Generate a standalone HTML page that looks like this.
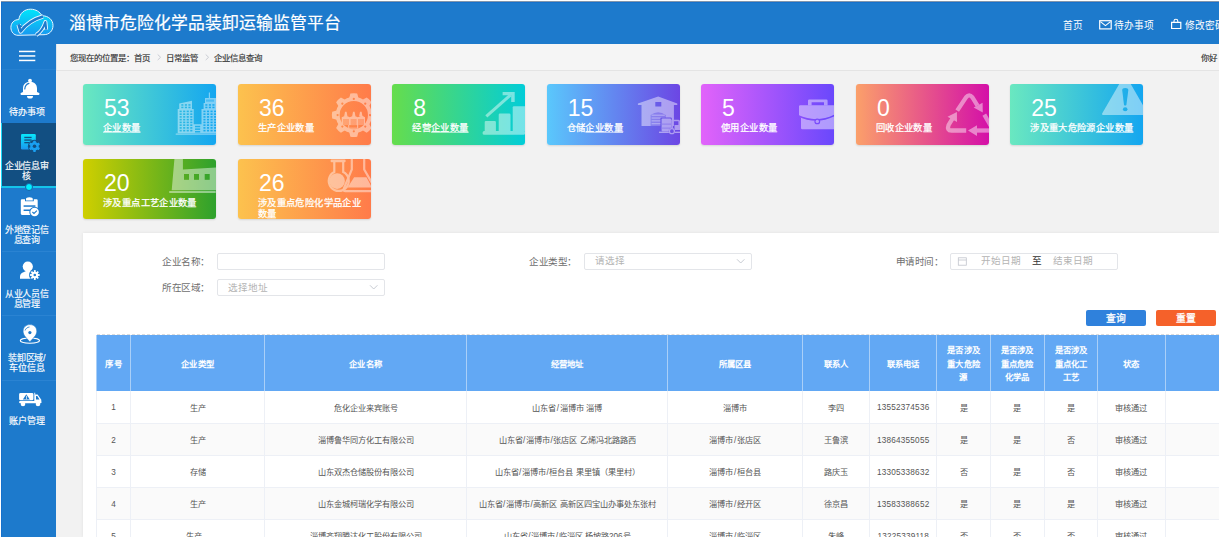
<!DOCTYPE html>
<html lang="zh-CN"><head><meta charset="utf-8">
<style>
*{box-sizing:border-box;margin:0;padding:0}
html,body{width:1219px;height:537px;overflow:hidden;background:#f2f2f2;font-family:"Liberation Sans",sans-serif}
.abs{position:absolute}
#frame{position:absolute;left:0;top:0;width:1219px;height:537px;border-top:1px solid #fff;border-left:1px solid #fff;pointer-events:none;z-index:80}
#frame2{position:absolute;left:1px;top:1px;width:1218px;height:1px;background:#8296ab;z-index:80}
#frame3{position:absolute;left:1px;top:2px;width:1218px;height:1px;background:#1671cc;z-index:80}
#frame4{position:absolute;left:1px;top:2px;width:1px;height:42px;background:#1671cc;z-index:49}
#header{position:absolute;left:0;top:0;width:1219px;height:44px;background:#1d7acc}
#title{position:absolute;left:69px;top:14px;font-size:16.8px;line-height:20px;color:#fff;white-space:nowrap;-webkit-text-stroke:0.2px #fff}
.hl{position:absolute;top:18.8px;font-size:9.7px;line-height:14px;color:#fff;white-space:nowrap}
#side{position:absolute;left:0;top:44px;width:56px;height:493px;background:#1d7acc;z-index:55}
.sitem{z-index:5}
.sitem{position:absolute;left:0;width:53.5px;color:#fff;text-align:center;font-size:9px;line-height:10px;letter-spacing:-0.25px;-webkit-text-stroke:0.15px #fff}
.sep{position:absolute;left:0;width:56px;height:1px;background:#2a83d2}
#crumb{position:absolute;left:56px;top:44px;width:1163px;height:27px;background:#f5f5f5;border-bottom:1px solid #e4e4e4;border-left:1px solid #dfe6ee}
#crumb .t{position:absolute;top:4px;font-size:8.45px;line-height:20px;color:#333;white-space:nowrap;-webkit-text-stroke:0.15px #333}
#crumb .g{color:#bbb}
.card{position:absolute;width:133px;height:61px;border-radius:3px;overflow:hidden;box-shadow:0 1px 2px rgba(0,0,0,.12);color:#fff}
.card .n{position:absolute;left:21px;top:10.3px;font-size:23px;line-height:28px;white-space:nowrap}
.card .l{position:absolute;left:20px;top:38.5px;width:108px;font-size:9.3px;line-height:11.2px;letter-spacing:0.38px;-webkit-text-stroke:0.25px #fff}
.card u{text-decoration:underline;text-decoration-color:rgba(255,255,255,.55);text-decoration-thickness:0.5px;text-underline-offset:0.5px}
.card svg{position:absolute;left:0;top:0}
#panel{position:absolute;left:83px;top:233px;width:1136px;height:304px;background:#fff;box-shadow:0 0 3px rgba(0,0,0,.08)}
.lab{position:absolute;font-size:9.6px;line-height:14px;letter-spacing:-0.5px;color:#6e6e6e;white-space:nowrap}
.inp{position:absolute;height:17px;border:1px solid #e3e5e9;border-radius:2px;background:#fff}
.ph{position:absolute;font-size:9.6px;line-height:14px;color:#b4b4b4;white-space:nowrap}
.btn{position:absolute;width:60px;height:16.5px;border-radius:2px;color:#fff;font-size:9.8px;line-height:17.4px;text-align:center;-webkit-text-stroke:0.3px #fff}
table{position:absolute;left:96.4px;top:334.5px;width:1187.3px;border-collapse:collapse;table-layout:fixed;font-size:8.2px;color:#555}
th{background:#62a8f4;color:#fff;font-weight:bold;height:56.5px;border-left:1px solid #a9cff8;line-height:13.7px;font-size:8.4px;letter-spacing:0.2px;padding-top:3.4px}
td{height:32px;padding-top:0px;text-align:center;border-left:1px solid #edf0f6;border-bottom:1px solid #edf0f6;white-space:nowrap}
tr.z td{background:#fafafa}
.sl{font-style:normal;margin:0 0.6px}
.dg{position:relative;top:1.2px}
#tdash{position:absolute;left:97px;top:334px;width:1122px;height:1px;border-top:1px dashed #dcdcdc;z-index:3}
</style></head><body>
<div id="header">
  <div id="title">淄博市危险化学品装卸运输监管平台</div>
  <div class="hl" style="left:1063px">首页</div>
  <div class="hl" style="left:1114px">待办事项</div>
  <div class="hl" style="left:1185px">修改密码</div>
  <svg class="abs" style="left:1090px;top:10px" width="100" height="30" viewBox="1090 10 100 30">
    <rect x="1099.7" y="20.7" width="11.5" height="8.2" fill="none" stroke="#fff" stroke-width="1.2"/>
    <path d="M1100.4,21.6 L1105.45,25.6 L1110.5,21.6" fill="none" stroke="#fff" stroke-width="1.1"/>
    <path d="M1171.6,22.3 L1180.8,22.3 L1180.8,28.5 L1171.6,28.5 Z" fill="none" stroke="#fff" stroke-width="1.2"/>
    <path d="M1174,22.3 L1174,21 Q1174,19.3 1175.9,19.3 Q1177.8,19.3 1177.8,21 L1177.8,22.3" fill="none" stroke="#fff" stroke-width="1.1"/>
  </svg>
</div>
<div id="side">
  <div class="abs" style="left:1px;top:0;width:1px;height:493px;background:#1671cc;z-index:1"></div>
  <div class="sep" style="top:25px;background:#2580d0"></div>
  <div class="abs" style="left:1px;top:79.3px;width:55px;height:63.7px;background:#124f82;border-left:1.5px solid #1ad8f8;z-index:2"></div>
  <div class="abs" style="left:1px;top:142px;width:55px;height:2.2px;background:#14c4ea;z-index:3"></div>
  <div class="abs" style="left:25.3px;top:138.6px;width:8px;height:8px;border-radius:50%;background:#00efff;border:1px solid #1760a6;z-index:4"></div>
  <div class="sep" style="top:206.5px"></div>
  <div class="sep" style="top:270.5px"></div>
  <div class="sep" style="top:335.5px"></div>
  <div class="sitem" style="top:63px">待办事项</div>
  <div class="sitem" style="top:117px">企业信息审<br>核</div>
  <div class="sitem" style="top:181px">外地登记信<br>息查询</div>
  <div class="sitem" style="top:245px">从业人员信<br>息管理</div>
  <div class="sitem" style="top:309px">装卸区域/<br>车位信息</div>
  <div class="sitem" style="top:372px">账户管理</div>
</div>
<svg class="abs" style="left:0;top:0;z-index:70" width="60" height="537" viewBox="0 0 60 537">
  <defs>
    <linearGradient id="cg" x1="0" y1="0" x2="0" y2="1"><stop offset="0" stop-color="#00e6fb"/><stop offset="1" stop-color="#1898f0"/></linearGradient>
    <linearGradient id="dg" x1="0" y1="0" x2="0" y2="1"><stop offset="0" stop-color="#08e8fc"/><stop offset="1" stop-color="#1a96ef"/></linearGradient>
  </defs>
  <!-- cloud logo -->
  <path d="M18,35.3 C13.5,35.3 10.9,31.5 10.9,27.5 C10.9,23 14,19.6 18.8,19.6 C19.8,13 24.5,9.2 30.5,9.2 C36,9.2 40,12 42,15.8 C48.5,15.6 53,20 53,25.5 C53,31 49,34.7 44,34.7 Z" fill="url(#cg)" stroke="#e8f6ff" stroke-width="1"/>
  <path d="M18.6,24.6 L20.6,31.4 Q28.5,20.5 43,16.4" fill="none" stroke="#e8f6ff" stroke-width="4.4" stroke-linejoin="round"/>
  <path d="M18.6,24.6 L20.6,31.4 Q28.5,20.5 43,16.4" fill="none" stroke="#1d7acc" stroke-width="2.6" stroke-linejoin="round"/>
  <path d="M18.3,23.6 L22.6,26.6 L19.6,28 Z" fill="#1d7acc"/>
  <path d="M36.2,35 Q42.5,31 45.4,22 L46.2,29.6" fill="none" stroke="#e8f6ff" stroke-width="3.9" stroke-linejoin="round"/>
  <path d="M36.2,35 Q42.5,31 45.4,22 L46.2,29.6" fill="none" stroke="#1d7acc" stroke-width="2.1" stroke-linejoin="round"/>
  <!-- hamburger -->
  <rect x="19" y="50.7" width="16.3" height="1.5" fill="#fff"/>
  <rect x="19" y="55.2" width="16.3" height="1.5" fill="#fff"/>
  <rect x="19" y="59.7" width="16.3" height="1.5" fill="#fff"/>
  <!-- bell -->
  <circle cx="30" cy="80.6" r="1.9" fill="#fff"/>
  <path d="M23,92 L23,88.5 C23,84.2 26,81.8 30,81.8 C34,81.8 37,84.2 37,88.5 L37,92 L39.2,93 C39.7,93.5 39.5,95 38.6,95 L21.4,95 C20.5,95 20.3,93.5 20.8,93 Z" fill="#fff"/>
  <path d="M27,95.9 L33,95.9 A3,2.6 0 0 1 27,95.9 Z" fill="#fff"/>
  <path d="M28.9,83.4 C26.6,84.1 25,86 24.8,89" fill="none" stroke="#1d7acc" stroke-width="1.2" stroke-linecap="round"/>
  <!-- doc gear (active) -->
  <rect x="21" y="134" width="14.8" height="15.6" rx="1.3" fill="url(#dg)"/>
  <rect x="24.3" y="136.8" width="7.3" height="1.3" fill="#124f82"/>
  <rect x="24.3" y="139.4" width="7.3" height="1.3" fill="#124f82"/>
  <rect x="24.3" y="142" width="5" height="1.3" fill="#124f82"/>
  <circle cx="34.5" cy="146.3" r="6.6" fill="#124f82"/>
  <g transform="translate(34.5,146.3)" fill="#1aa0f2">
    <circle r="4.2"/>
    <rect x="-1.3" y="-5.6" width="2.6" height="11.2" rx=".6"/>
    <rect x="-1.3" y="-5.6" width="2.6" height="11.2" rx=".6" transform="rotate(60)"/>
    <rect x="-1.3" y="-5.6" width="2.6" height="11.2" rx=".6" transform="rotate(120)"/>
  </g>
  <circle cx="34.5" cy="146.3" r="1.8" fill="#124f82"/>
  <!-- clipboard check -->
  <path d="M22,199.3 L25,199.3 L25,201.3 L33.8,201.3 L33.8,199.3 L36.6,199.3 Q37.7,199.3 37.7,200.4 L37.7,213.8 Q37.7,214.9 36.6,214.9 L22,214.9 Q20.8,214.9 20.8,213.8 L20.8,200.4 Q20.8,199.3 22,199.3 Z" fill="#fff"/>
  <path d="M26,200.6 L26,199 Q26,197.4 29.4,197.2 Q32.8,197.4 32.8,199 L32.8,200.6 Z" fill="#fff"/>
  <rect x="23.6" y="205.3" width="11.8" height="1.5" fill="#1d7acc"/>
  <rect x="23.6" y="209.5" width="7.6" height="1.5" fill="#1d7acc"/>
  <circle cx="34.6" cy="212" r="5.3" fill="#1d7acc"/>
  <circle cx="34.6" cy="212" r="4.3" fill="#fff"/>
  <path d="M32.4,212 L34,213.5 L36.9,210.6" fill="none" stroke="#1d7acc" stroke-width="1.1"/>
  <!-- person gear -->
  <circle cx="27.8" cy="266.6" r="5.1" fill="#fff"/>
  <path d="M20,278.7 L20,276.5 Q20,273 24,272 L26,271 L31,271 L31,278.7 Z" fill="#fff"/>
  <circle cx="34.8" cy="275" r="5.8" fill="#1d7acc"/>
  <g transform="translate(34.8,275)" fill="#fff">
    <circle r="3.3"/>
    <rect x="-0.9" y="-4.9" width="1.8" height="9.8"/>
    <rect x="-0.9" y="-4.9" width="1.8" height="9.8" transform="rotate(45)"/>
    <rect x="-0.9" y="-4.9" width="1.8" height="9.8" transform="rotate(90)"/>
    <rect x="-0.9" y="-4.9" width="1.8" height="9.8" transform="rotate(135)"/>
  </g>
  <circle cx="34.8" cy="275" r="1.3" fill="#1d7acc"/>
  <!-- pin -->
  <ellipse cx="29.9" cy="340.6" rx="9.6" ry="2.6" fill="none" stroke="#fff" stroke-width="1.1"/>
  <path d="M29.9,341.9 C27,338.5 23.1,335.5 23.1,331.3 C23.1,327.3 26,324.6 29.9,324.6 C33.8,324.6 36.8,327.3 36.8,331.3 C36.8,335.5 32.8,338.5 29.9,341.9 Z" fill="#fff" stroke="#1d7acc" stroke-width="0.6"/>
  <circle cx="29.9" cy="332.6" r="1.6" fill="#1d7acc"/>
  <path d="M29.5,327 C27.5,327.2 25.6,328.5 25.1,330.5" fill="none" stroke="#1d7acc" stroke-width="0.8"/>
  <!-- truck -->
  <rect x="19.1" y="393" width="14.3" height="7.3" rx="1.4" fill="#fff"/>
  <path d="M26.3,394.2 L29.8,399.4 L22.9,399.4 Z" fill="#1d7acc"/>
  <rect x="26" y="395.8" width="0.7" height="3.4" fill="#fff"/>
  <path d="M34.3,392.8 L35.2,392.8 L35.2,394.6 L37.6,394.6 L41.3,399.8 L41.3,403 L34.3,403 Z" fill="#fff"/>
  <path d="M36,396 L37.3,396 L39.5,399.5 L36,399.5 Z" fill="#1d7acc"/>
  <rect x="19.1" y="401" width="22.2" height="2.2" rx="1" fill="#fff"/>
  <circle cx="23" cy="403.9" r="2.3" fill="#fff"/>
  <circle cx="38" cy="403.9" r="2.3" fill="#fff"/>
</svg>
<div id="crumb">
  <div class="t" style="left:13px">您现在的位置是：首页</div>
  <svg class="abs" style="left:99px;top:9px" width="6" height="9" viewBox="0 0 6 9"><path d="M1.7,1.5 L4.6,4.25 L1.7,7" fill="none" stroke="#c4c6cf" stroke-width="0.9"/></svg>
  <div class="t" style="left:109.3px">日常监管</div>
  <svg class="abs" style="left:147.3px;top:9px" width="6" height="9" viewBox="0 0 6 9"><path d="M1.7,1.5 L4.6,4.25 L1.7,7" fill="none" stroke="#c4c6cf" stroke-width="0.9"/></svg>
  <div class="t" style="left:157.3px">企业信息查询</div>
  <div class="t" style="left:1144px">你好</div>
</div>
<!--CARDS-->
<div class="card" style="left:83.0px;top:84px;height:60.6px;background:linear-gradient(90deg,#6ae8c0,#14a6f0)">
<svg width="133" height="61" viewBox="0 0 133 61"><defs><mask id="m0" maskUnits="userSpaceOnUse" x="0" y="0" width="133" height="61"><path d="M96.2,19.5 L109,16.8 L109,25 L110.7,25 L110.7,40.2 L118.5,40.2 L118.5,25 L120.6,25 L120.6,19 L122,19 L122,14 L125.8,14 L125.8,8.4 L127,8.4 L127,14 L133,14 L133,49.3 L94.7,49.3 L94.7,25 L96.2,25 Z" fill="#fff"/>
<g fill="#000"><rect x="96.60" y="26.60" width="2.1" height="1.6"/><rect x="120.40" y="26.60" width="2.1" height="1.6"/><rect x="100.15" y="26.60" width="2.1" height="1.6"/><rect x="123.95" y="26.60" width="2.1" height="1.6"/><rect x="103.70" y="26.60" width="2.1" height="1.6"/><rect x="127.50" y="26.60" width="2.1" height="1.6"/><rect x="107.25" y="26.60" width="2.1" height="1.6"/><rect x="131.05" y="26.60" width="2.1" height="1.6"/><rect x="96.60" y="29.35" width="2.1" height="1.6"/><rect x="120.40" y="29.35" width="2.1" height="1.6"/><rect x="100.15" y="29.35" width="2.1" height="1.6"/><rect x="123.95" y="29.35" width="2.1" height="1.6"/><rect x="103.70" y="29.35" width="2.1" height="1.6"/><rect x="127.50" y="29.35" width="2.1" height="1.6"/><rect x="107.25" y="29.35" width="2.1" height="1.6"/><rect x="131.05" y="29.35" width="2.1" height="1.6"/><rect x="96.60" y="32.10" width="2.1" height="1.6"/><rect x="120.40" y="32.10" width="2.1" height="1.6"/><rect x="100.15" y="32.10" width="2.1" height="1.6"/><rect x="123.95" y="32.10" width="2.1" height="1.6"/><rect x="103.70" y="32.10" width="2.1" height="1.6"/><rect x="127.50" y="32.10" width="2.1" height="1.6"/><rect x="107.25" y="32.10" width="2.1" height="1.6"/><rect x="131.05" y="32.10" width="2.1" height="1.6"/><rect x="96.60" y="34.85" width="2.1" height="1.6"/><rect x="120.40" y="34.85" width="2.1" height="1.6"/><rect x="100.15" y="34.85" width="2.1" height="1.6"/><rect x="123.95" y="34.85" width="2.1" height="1.6"/><rect x="103.70" y="34.85" width="2.1" height="1.6"/><rect x="127.50" y="34.85" width="2.1" height="1.6"/><rect x="107.25" y="34.85" width="2.1" height="1.6"/><rect x="131.05" y="34.85" width="2.1" height="1.6"/><rect x="96.60" y="37.60" width="2.1" height="1.6"/><rect x="120.40" y="37.60" width="2.1" height="1.6"/><rect x="100.15" y="37.60" width="2.1" height="1.6"/><rect x="123.95" y="37.60" width="2.1" height="1.6"/><rect x="103.70" y="37.60" width="2.1" height="1.6"/><rect x="127.50" y="37.60" width="2.1" height="1.6"/><rect x="107.25" y="37.60" width="2.1" height="1.6"/><rect x="131.05" y="37.60" width="2.1" height="1.6"/><rect x="96.60" y="40.35" width="2.1" height="1.6"/><rect x="120.40" y="40.35" width="2.1" height="1.6"/><rect x="100.15" y="40.35" width="2.1" height="1.6"/><rect x="123.95" y="40.35" width="2.1" height="1.6"/><rect x="103.70" y="40.35" width="2.1" height="1.6"/><rect x="127.50" y="40.35" width="2.1" height="1.6"/><rect x="107.25" y="40.35" width="2.1" height="1.6"/><rect x="131.05" y="40.35" width="2.1" height="1.6"/><rect x="96.60" y="43.10" width="2.1" height="1.6"/><rect x="120.40" y="43.10" width="2.1" height="1.6"/><rect x="100.15" y="43.10" width="2.1" height="1.6"/><rect x="123.95" y="43.10" width="2.1" height="1.6"/><rect x="103.70" y="43.10" width="2.1" height="1.6"/><rect x="127.50" y="43.10" width="2.1" height="1.6"/><rect x="107.25" y="43.10" width="2.1" height="1.6"/><rect x="131.05" y="43.10" width="2.1" height="1.6"/><rect x="96.60" y="45.85" width="2.1" height="1.6"/><rect x="120.40" y="45.85" width="2.1" height="1.6"/><rect x="100.15" y="45.85" width="2.1" height="1.6"/><rect x="123.95" y="45.85" width="2.1" height="1.6"/><rect x="103.70" y="45.85" width="2.1" height="1.6"/><rect x="127.50" y="45.85" width="2.1" height="1.6"/><rect x="107.25" y="45.85" width="2.1" height="1.6"/><rect x="131.05" y="45.85" width="2.1" height="1.6"/><rect x="98.30" y="20.20" width="2.1" height="1.5"/><rect x="122.30" y="20.20" width="2.1" height="1.5"/><rect x="101.85" y="20.20" width="2.1" height="1.5"/><rect x="125.85" y="20.20" width="2.1" height="1.5"/><rect x="105.40" y="20.20" width="2.1" height="1.5"/><rect x="129.40" y="20.20" width="2.1" height="1.5"/><rect x="98.30" y="22.70" width="2.1" height="1.5"/><rect x="122.30" y="22.70" width="2.1" height="1.5"/><rect x="101.85" y="22.70" width="2.1" height="1.5"/><rect x="125.85" y="22.70" width="2.1" height="1.5"/><rect x="105.40" y="22.70" width="2.1" height="1.5"/><rect x="129.40" y="22.70" width="2.1" height="1.5"/><rect x="112" y="41.80" width="5.2" height="1.5"/><rect x="112" y="44.40" width="5.2" height="1.5"/><rect x="112" y="47.00" width="5.2" height="1.5"/><rect x="123" y="15.5" width="8" height="2.2" opacity=".5"/></g>
<rect x="92.5" y="49.4" width="41" height="1.4" rx=".7" fill="#fff"/></mask></defs><rect width="133" height="61" fill="#fff" opacity="0.45" mask="url(#m0)"/></svg>
<div class="n">53</div><div class="l"><u>企业数量</u></div></div>
<div class="card" style="left:237.9px;top:84px;height:60.6px;background:linear-gradient(90deg,#fcc24e,#ff7b4a)">
<svg width="133" height="61" viewBox="0 0 133 61"><defs><mask id="m1" maskUnits="userSpaceOnUse" x="0" y="0" width="133" height="61"><g transform="translate(115.8,31.1)">
<g fill="#fff"><path d="M-4.6,-17 L-3.4,-21.6 Q0,-22.3 3.4,-21.6 L4.6,-17 Z" transform="rotate(0)"/><path d="M-4.6,-17 L-3.4,-21.6 Q0,-22.3 3.4,-21.6 L4.6,-17 Z" transform="rotate(45)"/><path d="M-4.6,-17 L-3.4,-21.6 Q0,-22.3 3.4,-21.6 L4.6,-17 Z" transform="rotate(90)"/><path d="M-4.6,-17 L-3.4,-21.6 Q0,-22.3 3.4,-21.6 L4.6,-17 Z" transform="rotate(135)"/><path d="M-4.6,-17 L-3.4,-21.6 Q0,-22.3 3.4,-21.6 L4.6,-17 Z" transform="rotate(180)"/><path d="M-4.6,-17 L-3.4,-21.6 Q0,-22.3 3.4,-21.6 L4.6,-17 Z" transform="rotate(225)"/><path d="M-4.6,-17 L-3.4,-21.6 Q0,-22.3 3.4,-21.6 L4.6,-17 Z" transform="rotate(270)"/><path d="M-4.6,-17 L-3.4,-21.6 Q0,-22.3 3.4,-21.6 L4.6,-17 Z" transform="rotate(315)"/></g>
<circle r="16.1" fill="none" stroke="#fff" stroke-width="3.9"/>
<g fill="#000"><circle cx="0" cy="-16.2" r="1.1" transform="rotate(0)"/><circle cx="0" cy="-16.2" r="1.1" transform="rotate(45)"/><circle cx="0" cy="-16.2" r="1.1" transform="rotate(90)"/><circle cx="0" cy="-16.2" r="1.1" transform="rotate(135)"/><circle cx="0" cy="-16.2" r="1.1" transform="rotate(180)"/><circle cx="0" cy="-16.2" r="1.1" transform="rotate(225)"/><circle cx="0" cy="-16.2" r="1.1" transform="rotate(270)"/><circle cx="0" cy="-16.2" r="1.1" transform="rotate(315)"/></g>
<g fill="#fff">
<path d="M-9.6,1 L-8.8,-3.4 L-7.2,-3.4 L-6.4,1 Z M-1.6,1 L-0.8,-3.4 L0.8,-3.4 L1.6,1 Z M5.4,1 L6.2,-3.4 L7.8,-3.4 L8.6,1 Z"/>
<path d="M-12.1,2.2 L-8,0.4 L-4,2.2 L0,0.4 L4,2.2 L8,0.4 L11.2,2.2 L11.2,10 L-12.1,10 Z"/>
<rect x="-5.6" y="9.5" width="10" height="4"/>
</g>
<g fill="#000">
<rect x="-4.6" y="10" width="7.9" height="2.6"/>
<rect x="-10.8" y="4.4" width="6" height="1"/><rect x="-10.8" y="6.4" width="6" height="1"/><rect x="-10.8" y="8.4" width="6" height="1"/>
<rect x="-3.2" y="4.4" width="6" height="1"/><rect x="-3.2" y="6.4" width="6" height="1"/><rect x="-3.2" y="8.4" width="6" height="1"/>
<rect x="4.2" y="4.4" width="6" height="1"/><rect x="4.2" y="6.4" width="6" height="1"/><rect x="4.2" y="8.4" width="6" height="1"/>
</g>
</g></mask></defs><rect width="133" height="61" fill="#fff" opacity="0.45" mask="url(#m1)"/></svg>
<div class="n">36</div><div class="l">生产企业数量</div></div>
<div class="card" style="left:392.3px;top:84px;height:60.6px;background:linear-gradient(90deg,#66dd4c,#02cdd8)">
<svg width="133" height="61" viewBox="0 0 133 61"><defs><mask id="m2" maskUnits="userSpaceOnUse" x="0" y="0" width="133" height="61"><g fill="#fff">
<rect x="90.5" y="47" width="43" height="3.8" rx="1.9"/>
<rect x="92.7" y="36.9" width="11.2" height="10.6" rx="1.2"/>
<rect x="106.7" y="29.6" width="11.8" height="17.9" rx="1.2"/>
<rect x="120.7" y="22.3" width="13" height="25.2" rx="1.2"/>
<path d="M93.3,31.2 L117.6,9.8 L119.6,12.2 L95.3,33.6 Z"/>
<path d="M110.6,8 L122.7,8 L122.7,17.9 L119.2,17.9 L119.2,11.2 L110.6,11.2 Z"/>
</g></mask></defs><rect width="133" height="61" fill="#fff" opacity="0.45" mask="url(#m2)"/></svg>
<div class="n">8</div><div class="l">经营<u>企业数量</u></div></div>
<div class="card" style="left:546.7px;top:84px;height:60.6px;background:linear-gradient(90deg,#5ac8fc,#6c46e4)">
<svg width="133" height="61" viewBox="0 0 133 61"><defs><mask id="m3" maskUnits="userSpaceOnUse" x="0" y="0" width="133" height="61"><path d="M90.9,19.4 L111.2,12.6 L130.3,19.4 L130.3,21 L126.9,21 L126.9,41.9 L94.5,41.9 L94.5,21 L90.9,21 Z" fill="#fff"/>
<rect x="108.3" y="18" width="6" height="4.5" fill="#000"/>
<path d="M103.6,42 L103.6,31 Q111.2,25.4 118.8,31 L118.8,42 Z" fill="#777"/>
<g fill="#fff"><rect x="104.6" y="30.6" width="13.2" height="1.3"/><rect x="104.6" y="33.4" width="13.2" height="1.3"/><rect x="104.6" y="36.2" width="13.2" height="1.3"/><rect x="104.6" y="39" width="13.2" height="1.3"/></g>
<rect x="113.4" y="33.6" width="11.4" height="14.6" rx="1" fill="#000"/>
<rect x="114.6" y="34.6" width="9.5" height="13" rx="1" fill="#fff"/>
<rect x="114.6" y="39.6" width="9.5" height="1" fill="#888"/>
<rect x="114.6" y="43.6" width="9.5" height="1" fill="#888"/>
<rect x="124.3" y="35.8" width="1.6" height="11.4" fill="#fff"/>
<path d="M125.9,35.8 L131.5,35.8 Q133,35.8 133,37.3 L133,46 L127.5,46 L127.5,41 L131.4,41 L131.4,37.3 L125.9,37.3 Z" fill="#fff"/>
<rect x="112" y="47.6" width="21" height="1.4" fill="#fff"/>
<circle cx="124.9" cy="47.2" r="3.2" fill="#000"/>
<circle cx="124.9" cy="47.2" r="2.5" fill="none" stroke="#fff" stroke-width="1.3"/></mask></defs><rect width="133" height="61" fill="#fff" opacity="0.45" mask="url(#m3)"/></svg>
<div class="n">15</div><div class="l">仓储<u>企业数量</u></div></div>
<div class="card" style="left:701.0px;top:84px;height:60.6px;background:linear-gradient(90deg,#e263fa,#6a48fc)">
<svg width="133" height="61" viewBox="0 0 133 61"><defs><mask id="m4" maskUnits="userSpaceOnUse" x="0" y="0" width="133" height="61"><path d="M107,21.4 L107,16.8 Q107,15.6 108.2,15.6 L125.4,15.6 Q126.6,15.6 126.6,16.8 L126.6,21.4 L123,21.4 L123,18.2 L110.6,18.2 L110.6,21.4 Z" fill="#fff"/>
<path d="M98,22.4 Q98,21.2 99.2,21.2 L133,21.2 L133,45.3 L101.2,45.3 Q100,45.3 100,44.1 L100,33.6 Q98,32.6 98,31.6 Z" fill="#fff"/>
<path d="M97,31.8 Q116,40.5 134,31.2" fill="none" stroke="#000" stroke-width="1.6"/>
<circle cx="116.3" cy="37.4" r="2.9" fill="#000"/>
<circle cx="116.3" cy="37.4" r="1.7" fill="#fff"/></mask></defs><rect width="133" height="61" fill="#fff" opacity="0.45" mask="url(#m4)"/></svg>
<div class="n">5</div><div class="l">使用企业数量</div></div>
<div class="card" style="left:855.9px;top:84px;height:60.6px;background:linear-gradient(90deg,#fba06a,#d410a8)">
<svg width="133" height="61" viewBox="0 0 133 61"><defs><mask id="m5" maskUnits="userSpaceOnUse" x="0" y="0" width="133" height="61"><g fill="none" stroke="#fff" stroke-width="4.3" stroke-linejoin="round">
<path d="M101.2,26.6 L110,13.4 Q113.2,9.2 116.4,13.4 L121.5,21.6"/>
<path d="M128.3,30.6 L137,45.5"/>
<path d="M96.5,34.6 L92.6,41 Q90.6,46.5 95.5,46.5 L110.2,46.5"/>
<path d="M119.5,46.5 L134,46.5"/>
</g>
<g fill="#fff">
<path d="M117.6,23.6 L126.6,18.8 L126.8,28.6 Z"/>
<path d="M112,46.6 L121,41.2 L121,52 Z"/>
<path d="M100.9,27.9 L91.5,32.8 L101,38 Z"/>
</g></mask></defs><rect width="133" height="61" fill="#fff" opacity="0.45" mask="url(#m5)"/></svg>
<div class="n">0</div><div class="l">回收企业数量</div></div>
<div class="card" style="left:1010.2px;top:84px;height:60.6px;background:linear-gradient(90deg,#6ae8c0,#14a6f0)">
<svg width="133" height="61" viewBox="0 0 133 61"><defs><mask id="m6" maskUnits="userSpaceOnUse" x="0" y="0" width="133" height="61"><path d="M115,-10 L138.5,30.9 L93.2,30.9 Q91.4,30.9 92.3,29.2 Z" fill="#fff"/>
<path d="M112.2,6 Q112.2,4 115.2,4 Q118.3,4 118.3,6 L116.4,21 Q115.2,22 114,21 Z" fill="#000"/>
<ellipse cx="115.2" cy="25.3" rx="2.3" ry="2" fill="#000"/></mask></defs><rect width="133" height="61" fill="#fff" opacity="0.45" mask="url(#m6)"/></svg>
<div class="n">25</div><div class="l">涉及重大危险源<u>企业数量</u></div></div>
<div class="card" style="left:83.0px;top:159px;height:59.8px;background:linear-gradient(90deg,#cfcf00,#2ea12d)">
<svg width="133" height="61" viewBox="0 0 133 61"><defs><mask id="m7" maskUnits="userSpaceOnUse" x="0" y="0" width="133" height="61"><path d="M91.5,-1 L99.9,-1 L99.9,10.5 L133,8.6 L133,31.2 L88.7,31.2 Z" fill="#fff"/>
<g fill="#000"><rect x="101" y="15" width="5" height="5.8"/><rect x="111" y="15" width="5" height="5.8"/><rect x="121.7" y="15" width="5" height="5.8"/></g>
<rect x="86" y="32" width="47" height="2" rx="1" fill="#fff"/></mask></defs><rect width="133" height="61" fill="#fff" opacity="0.45" mask="url(#m7)"/></svg>
<div class="n">20</div><div class="l">涉及重点工艺企业数量</div></div>
<div class="card" style="left:237.9px;top:159px;height:59.8px;background:linear-gradient(90deg,#fcc24e,#ff7b4a)">
<svg width="133" height="61" viewBox="0 0 133 61"><defs><mask id="m8" maskUnits="userSpaceOnUse" x="0" y="0" width="133" height="61"><g fill="none" stroke="#fff" stroke-width="2.2">
<path d="M96.3,2 L96.3,13 A10,10 0 1 0 105.2,13 L105.2,2"/>
<path d="M113.8,0 L113.8,10.5 L105.8,29.6 Q105,32.2 107.5,32.2 L136,32.2 M126.2,0 L126.2,10.5 L138,31"/>
</g>
<rect x="92.6" y="0.6" width="15" height="2.6" rx="1" fill="#fff"/>
<circle cx="99.1" cy="22.1" r="7.8" fill="#fff"/>
<path d="M116.1,18.2 L128.5,18.2 L134,28.6 L109.6,28.6 Z" fill="#fff"/></mask></defs><rect width="133" height="61" fill="#fff" opacity="0.45" mask="url(#m8)"/></svg>
<div class="n">26</div><div class="l">涉及重点危险化学品企业数量</div></div>
<!--/CARDS-->
<div id="panel"></div>
<div class="lab" style="left:162px;top:255px">企业名称：</div>
<div class="inp" style="left:217.3px;top:252.7px;width:168px"></div>
<div class="lab" style="left:162px;top:280.5px">所在区域：</div>
<div class="inp" style="left:217.3px;top:278.6px;width:168px"></div>
<div class="ph" style="left:228px;top:280.5px">选择地址</div>
<svg class="abs" style="left:368px;top:283px" width="12" height="8" viewBox="0 0 12 8"><path d="M2,2.3 L5.7,6 L9.4,2.3" fill="none" stroke="#c0c4cc" stroke-width="0.9"/></svg>
<div class="lab" style="left:529px;top:255px">企业类型：</div>
<div class="inp" style="left:584.4px;top:252.7px;width:167.5px"></div>
<div class="ph" style="left:594.5px;top:254px">请选择</div>
<svg class="abs" style="left:735px;top:257px" width="12" height="8" viewBox="0 0 12 8"><path d="M2,2.3 L5.7,6 L9.4,2.3" fill="none" stroke="#c0c4cc" stroke-width="0.9"/></svg>
<div class="lab" style="left:895.5px;top:255px">申请时间：</div>
<div class="inp" style="left:950.2px;top:252.7px;width:167.5px"></div>
<svg class="abs" style="left:956px;top:255px" width="12" height="12" viewBox="0 0 12 12"><rect x="2.3" y="2.8" width="8" height="7.4" fill="none" stroke="#c0c4cc" stroke-width="0.8"/><line x1="2.3" y1="5" x2="10.3" y2="5" stroke="#c0c4cc" stroke-width="0.8"/></svg>
<div class="ph" style="left:981px;top:254px">开始日期</div>
<div class="lab" style="left:1032px;top:254px;color:#333">至</div>
<div class="ph" style="left:1053px;top:254px">结束日期</div>
<div class="btn" style="left:1086px;top:309.6px;background:#2f81dc">查询</div>
<div class="btn" style="left:1155.7px;top:309.6px;background:#f5612a">重置</div>
<table><colgroup><col style="width:33.5px"><col style="width:134.3px"><col style="width:201.9px"><col style="width:201.1px"><col style="width:134.7px"><col style="width:67.4px"><col style="width:67.0px"><col style="width:53.7px"><col style="width:53.7px"><col style="width:53.6px"><col style="width:67.4px"><col style="width:120px"></colgroup>
<tr><th>序号</th><th>企业类型</th><th>企业名称</th><th>经营地址</th><th>所属区县</th><th>联系人</th><th>联系电话</th><th>是否涉及<br>重大危险<br>源</th><th>是否涉及<br>重点危险<br>化学品</th><th>是否涉及<br>重点化工<br>工艺</th><th>状态</th><th></th></tr>
<tr><td><span class="dg">1</span></td><td>生产</td><td>危化企业来宾账号</td><td>山东省<i class="sl">/</i>淄博市 淄博</td><td>淄博市</td><td>李四</td><td><span class="dg" style="letter-spacing:.2px">13552374536</span></td><td>是</td><td>是</td><td>是</td><td>审核通过</td><td></td></tr>
<tr class="z"><td><span class="dg">2</span></td><td>生产</td><td>淄博鲁华同方化工有限公司</td><td>山东省<i class="sl">/</i>淄博市<i class="sl">/</i>张店区 乙烯冯北路路西</td><td>淄博市<i class="sl">/</i>张店区</td><td>王鲁滨</td><td><span class="dg" style="letter-spacing:.2px">13864355055</span></td><td>是</td><td>是</td><td>否</td><td>审核通过</td><td></td></tr>
<tr><td><span class="dg">3</span></td><td>存储</td><td>山东双杰仓储股份有限公司</td><td>山东省<i class="sl">/</i>淄博市<i class="sl">/</i>桓台县 果里镇（果里村）</td><td>淄博市<i class="sl">/</i>桓台县</td><td>路庆玉</td><td><span class="dg" style="letter-spacing:.2px">13305338632</span></td><td>否</td><td>是</td><td>否</td><td>审核通过</td><td></td></tr>
<tr class="z"><td><span class="dg">4</span></td><td>生产</td><td>山东金城柯瑞化学有限公司</td><td>山东省<i class="sl">/</i>淄博市<i class="sl">/</i>高新区 高新区四宝山办事处东张村</td><td>淄博市<i class="sl">/</i>经开区</td><td>徐京昌</td><td><span class="dg" style="letter-spacing:.2px">13583388652</span></td><td>是</td><td>是</td><td>是</td><td>审核通过</td><td></td></tr>
<tr><td><span class="dg">5</span></td><td>生产、</td><td>淄博齐翔腾达化工股份有限公司</td><td>山东省<i class="sl">/</i>淄博市<i class="sl">/</i>临淄区 杨坡路206号</td><td>淄博市<i class="sl">/</i>临淄区</td><td>朱峰</td><td><span class="dg" style="letter-spacing:.2px">13225339118</span></td><td>否</td><td>否</td><td>否</td><td>审核通过</td><td></td></tr>
</table>
<div id="tdash"></div>
<div id="frame"></div><div id="frame2"></div><div id="frame3"></div><div id="frame4"></div>
</body></html>
